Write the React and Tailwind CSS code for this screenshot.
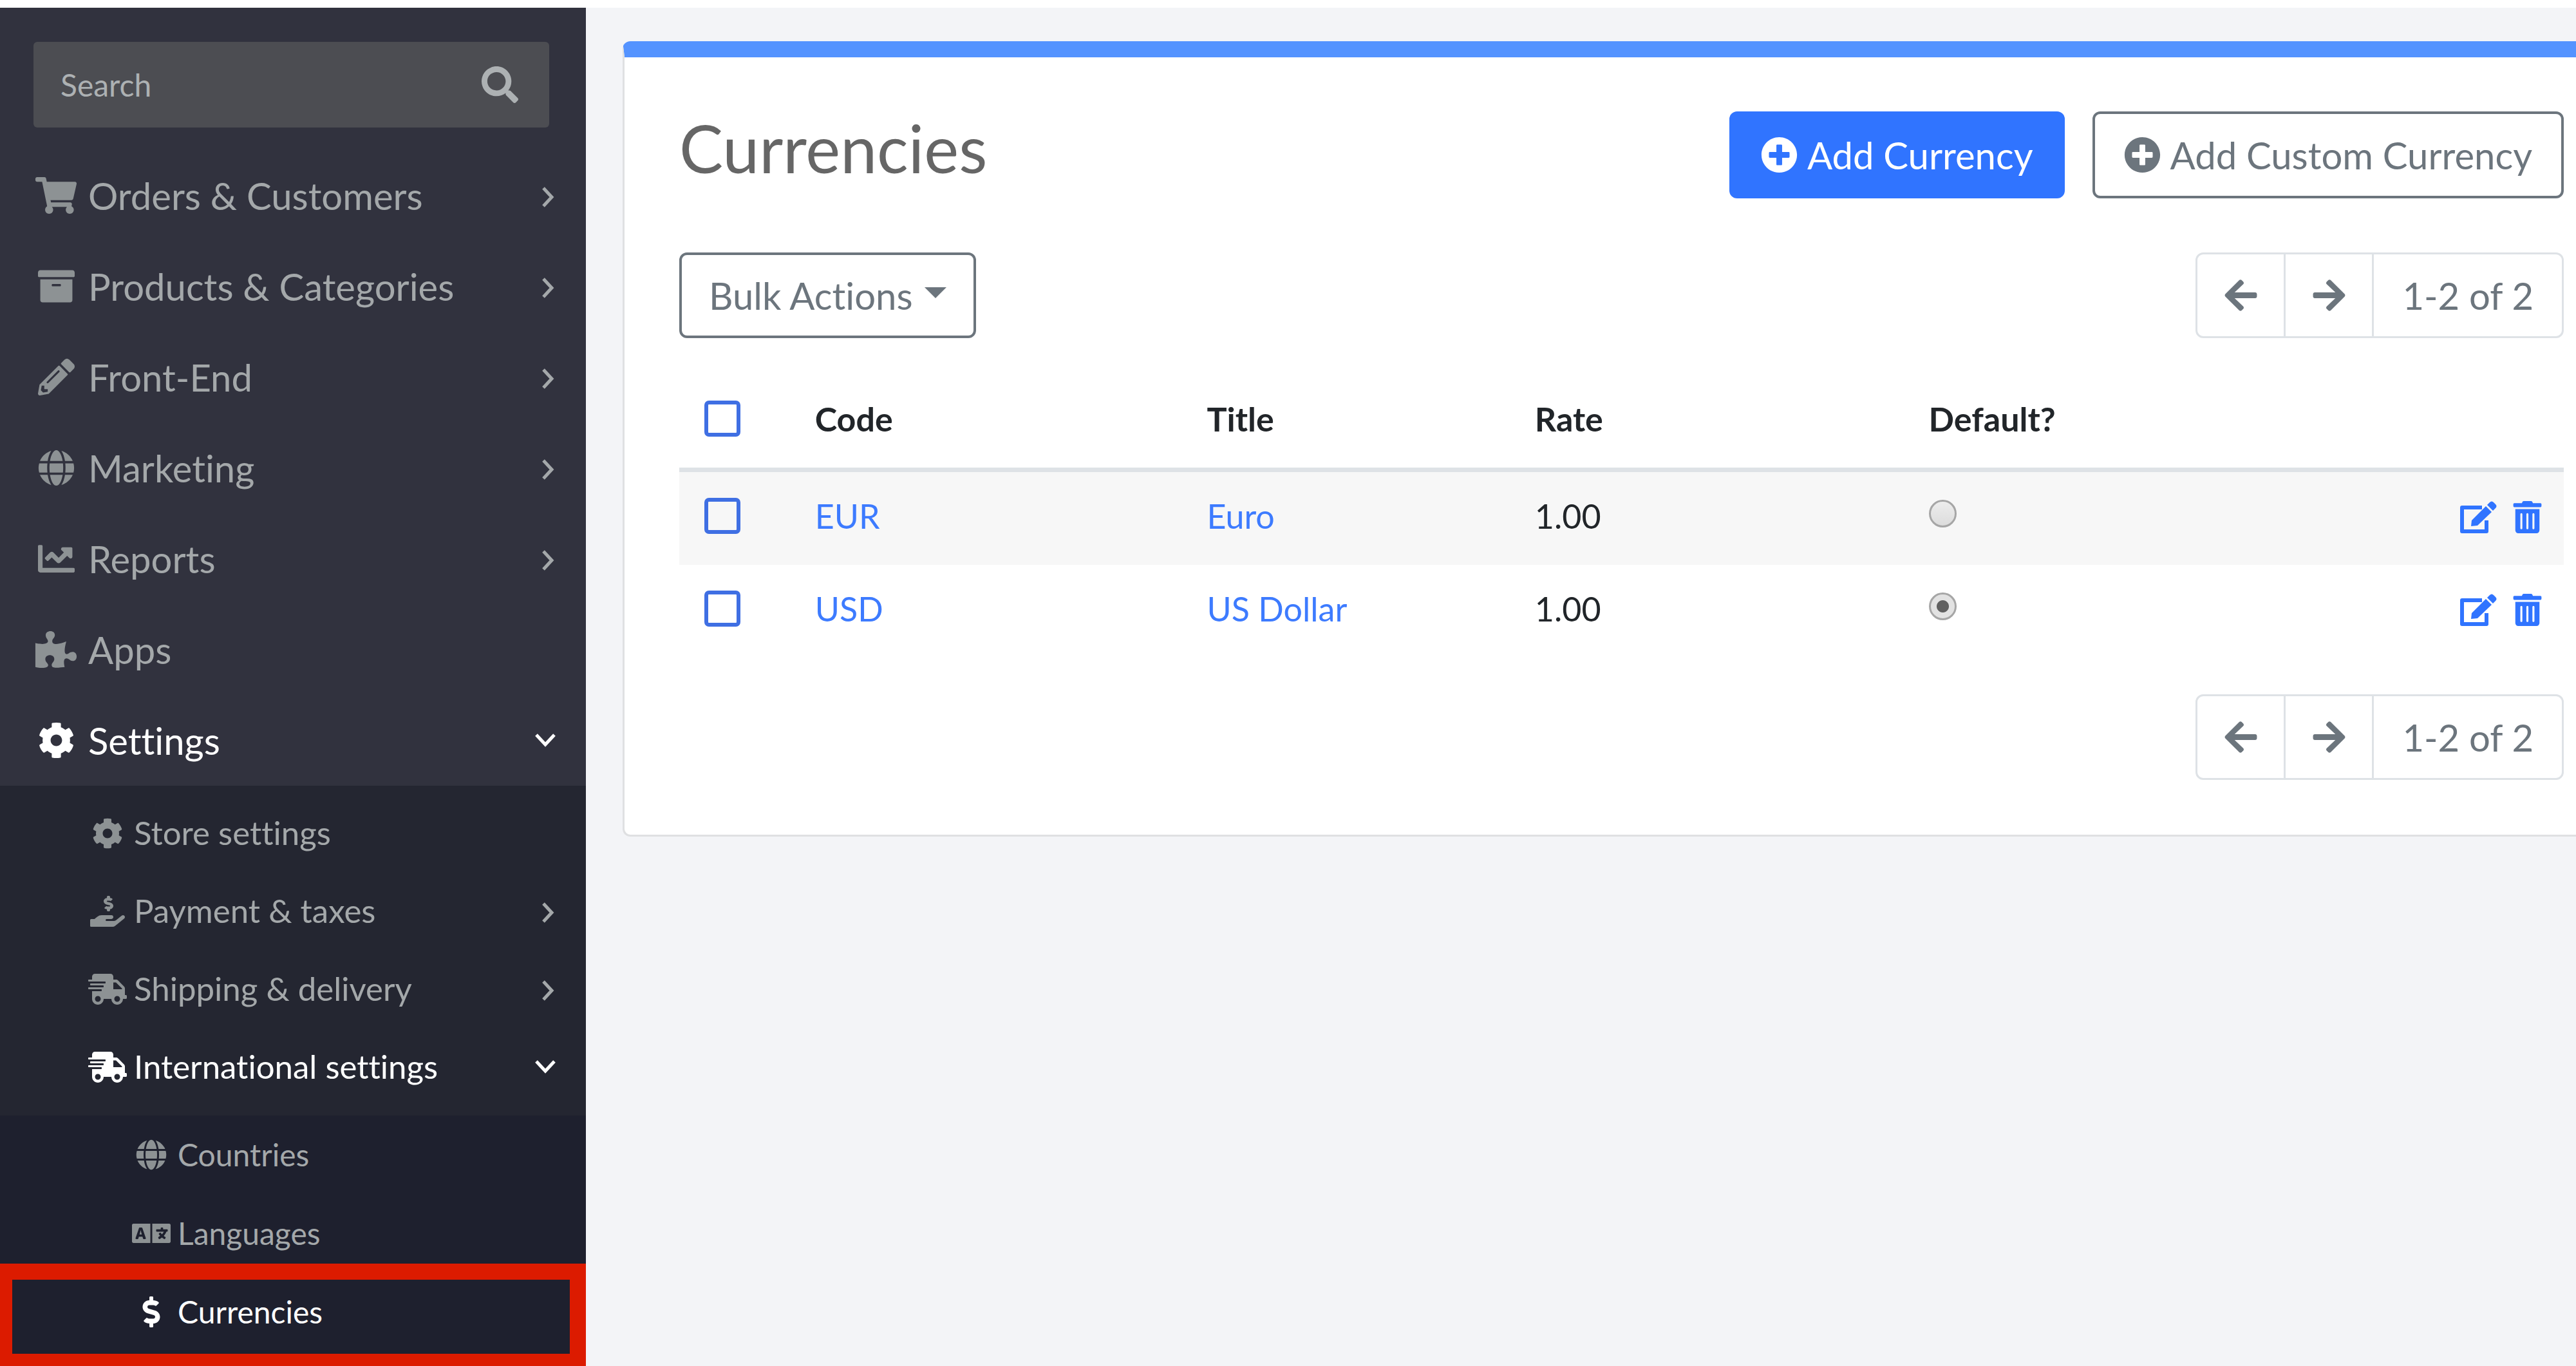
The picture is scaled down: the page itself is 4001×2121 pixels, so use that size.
import React, { useState } from "react";
import {
  FaArchive,
  FaArrowLeft,
  FaArrowRight,
  FaChartLine,
  FaCog,
  FaDollarSign,
  FaGlobe,
  FaHandHoldingUsd,
  FaLanguage,
  FaPencilAlt,
  FaPlusCircle,
  FaPuzzlePiece,
  FaSearch,
  FaShippingFast,
  FaShoppingCart,
  FaTrashAlt,
} from "react-icons/fa";

const mainMenu = [
  { label: "Orders & Customers", icon: FaShoppingCart, arrow: "right" },
  { label: "Products & Categories", icon: FaArchive, arrow: "right" },
  { label: "Front-End", icon: FaPencilAlt, arrow: "right" },
  { label: "Marketing", icon: FaGlobe, arrow: "right" },
  { label: "Reports", icon: FaChartLine, arrow: "right" },
  { label: "Apps", icon: FaPuzzlePiece },
  { label: "Settings", icon: FaCog, arrow: "down", active: true },
];

const settingsMenu = [
  { label: "Store settings", icon: FaCog },
  { label: "Payment & taxes", icon: FaHandHoldingUsd, arrow: "right" },
  { label: "Shipping & delivery", icon: FaShippingFast, arrow: "right" },
  { label: "International settings", icon: FaShippingFast, arrow: "down", active: true },
];

const internationalMenu = [
  { label: "Countries", icon: FaGlobe },
  { label: "Languages", icon: FaLanguage },
  { label: "Currencies", icon: FaDollarSign, active: true, highlight: true },
];

const currencies = [
  { code: "EUR", title: "Euro", rate: "1.00" },
  { code: "USD", title: "US Dollar", rate: "1.00" },
];

const levels = {
  1: { row: "h-[141px] pl-[52px] gap-[15px] text-[58px]", icon: "w-[70px]", svg: "size-[57px]" },
  2: { row: "h-[121px] pl-[136px] gap-[10px] text-[51px]", icon: "w-[62px]", svg: "size-[48px]" },
  3: { row: "h-[122px] pl-[204px] gap-[10px] text-[48px]", icon: "w-[62px]", svg: "size-[48px]" },
};

// icons wider than their em box keep the em height
const wideIcons = [FaShoppingCart, FaPuzzlePiece, FaHandHoldingUsd, FaShippingFast, FaLanguage];

const Chevron = ({ direction }) => (
  <svg
    viewBox="0 0 36 36"
    fill="none"
    stroke="currentColor"
    strokeWidth="5"
    className="size-[36px] shrink-0"
    aria-hidden="true"
  >
    <path d={direction === "down" ? "M4 9 L18 24 L32 9" : "M15 6 L28 20 L15 34"} />
  </svg>
);

const EditIcon = () => (
  <svg viewBox="0 0 57 50" fill="currentColor" className="h-[50px] w-[57px]" aria-hidden="true">
    <path d="M34 10H3V47H41V30" fill="none" stroke="currentColor" strokeWidth="6" strokeLinejoin="round" />
    <path d="M40 8L49 17L27 38L17 39L18 30Z" />
    <path d="M42 6L46 2Q49 -1 52 2L55 5Q58 8 55 11L51 15Z" />
  </svg>
);

const MenuItem = ({ item, level }) => {
  const Icon = item.icon;
  const styles = levels[level];
  const wide = wideIcons.includes(Icon);

  return (
    <li className="relative">
      <a
        href="#"
        className={`flex items-center pr-[45px] whitespace-nowrap ${styles.row} ${
          item.active ? "text-white" : "text-[#a4a8aa]"
        }`}
      >
        <span
          className={`flex shrink-0 justify-center ${styles.icon} ${
            item.active ? "text-white" : "text-[#8d9294]"
          }`}
        >
          <Icon className={wide ? `${styles.svg} w-full` : styles.svg} />
        </span>
        <span className="grow">{item.label}</span>
        {item.arrow && <Chevron direction={item.arrow} />}
      </a>
      {item.highlight && (
        <span className="pointer-events-none absolute inset-x-0 -top-[14px] -bottom-[23px] border-t-[25px] border-r-[25px] border-b-[19px] border-l-[19px] border-[#dc1b00]" />
      )}
    </li>
  );
};

const Sidebar = () => (
  <aside className="w-[910px] shrink-0 bg-[#31323e] pt-[53px]">
    <form className="mr-[57px] mb-[35px] ml-[52px] flex h-[133px] items-center rounded-[6px] bg-[#4c4d52] pr-[48px] pl-[42px]">
      <input
        type="text"
        aria-label="Search"
        placeholder="Search"
        className="min-w-0 grow bg-transparent text-[48px] text-white outline-none placeholder:text-[#adb1b3]"
      />
      <button type="button" aria-label="Search" className="text-[#adb1b3]">
        <FaSearch className="size-[57px]" />
      </button>
    </form>
    <nav>
      <ul>
        {mainMenu.map((item) => (
          <MenuItem key={item.label} item={item} level={1} />
        ))}
      </ul>
      <ul className="bg-[#242631] pt-[13px] pb-[15px]">
        {settingsMenu.map((item) => (
          <MenuItem key={item.label} item={item} level={2} />
        ))}
      </ul>
      <ul className="bg-[#1e202e] pb-[23px]">
        {internationalMenu.map((item) => (
          <MenuItem key={item.label} item={item} level={3} />
        ))}
      </ul>
    </nav>
  </aside>
);

const Pager = () => (
  <div className="flex h-[133px] divide-x-3 divide-[#dee2e6] rounded-[12px] border-3 border-[#dee2e6] text-[58px] text-[#6c757d]">
    <button type="button" aria-label="Previous page" className="flex w-[137px] items-center justify-center">
      <FaArrowLeft className="size-[57px]" />
    </button>
    <button type="button" aria-label="Next page" className="flex w-[137px] items-center justify-center">
      <FaArrowRight className="size-[57px]" />
    </button>
    <span className="flex items-center px-[44px]">1-2 of 2</span>
  </div>
);

const Checkbox = ({ label }) => (
  <input
    type="checkbox"
    aria-label={label}
    className="block size-[56px] appearance-none rounded-[7px] border-6 border-[#3f6fe3] bg-transparent checked:bg-[#3f6fe3]"
  />
);

const CurrencyTable = () => {
  const [defaultCode, setDefaultCode] = useState("USD");

  return (
    <table className="mt-[57px] w-full table-fixed border-separate border-spacing-0 text-left text-[52px] text-[#212529]">
      <thead>
        <tr>
          <th className="h-[151px] w-[7.2%] border-b-7 border-[#dee2e6] pb-2 pl-[39px]">
            <Checkbox label="Select all" />
          </th>
          <th className="w-[20.8%] border-b-7 border-[#dee2e6] pb-2 font-bold">Code</th>
          <th className="w-[17.4%] border-b-7 border-[#dee2e6] pb-2 font-bold">Title</th>
          <th className="w-[20.9%] border-b-7 border-[#dee2e6] pb-2 font-bold">Rate</th>
          <th className="border-b-7 border-[#dee2e6] pb-2 font-bold">Default?</th>
          <th className="w-[12%] border-b-7 border-[#dee2e6] pb-2" />
        </tr>
      </thead>
      <tbody>
        {currencies.map((currency) => (
          <tr key={currency.code} className="odd:bg-[#f7f7f7]">
            <td className="h-[144px] pb-2 pl-[39px]">
              <Checkbox label={`Select ${currency.code}`} />
            </td>
            <td className="pb-2">
              <a href="#" className="text-[#3d7bff]">{currency.code}</a>
            </td>
            <td className="pb-2">
              <a href="#" className="text-[#3d7bff]">{currency.title}</a>
            </td>
            <td className="pb-2">{currency.rate}</td>
            <td className="pb-4">
              <input
                type="radio"
                name="default"
                aria-label={`${currency.code} is default`}
                checked={defaultCode === currency.code}
                onChange={() => setDefaultCode(currency.code)}
                className="block size-[43px] appearance-none rounded-full border-3 border-[#a6a6a6] bg-linear-to-b from-[#ededed] to-[#dcdcdc] checked:bg-[radial-gradient(circle,#606060_9px,#e2e2e2_10px)]"
              />
            </td>
            <td className="pr-[34px] pb-1">
              <div className="flex items-center justify-end gap-[25px] text-[#3074ff]">
                <button type="button" aria-label={`Edit ${currency.code}`}>
                  <EditIcon />
                </button>
                <button type="button" aria-label={`Delete ${currency.code}`}>
                  <FaTrashAlt className="h-[50px] w-[45px]" />
                </button>
              </div>
            </td>
          </tr>
        ))}
      </tbody>
    </table>
  );
};

export default function App() {
  return (
    <div className="min-h-screen bg-white pt-3 font-['Lato',sans-serif] [font-variant-ligatures:none]">
      <div className="flex min-h-[calc(100vh-12px)] bg-[#f3f4f7]">
        <Sidebar />
        <main className="min-w-0 grow pt-[52px] pl-[57px]">
          <section className="rounded-l-[12px] border-b-3 border-l-3 border-t-25 border-b-[#dfe0e2] border-l-[#dfe0e2] border-t-[#5493ff] bg-white pt-[84px] pr-[19px] pb-[85px] pl-[85px]">
            <div className="flex items-start justify-between">
              <h1 className="text-[102px] leading-[114px] text-[#666666]">Currencies</h1>
              <div className="flex gap-[43px] text-[58px] whitespace-nowrap">
                <button
                  type="button"
                  className="flex h-[135px] items-center gap-[15px] rounded-[12px] bg-[#3074ff] px-[49px] text-white"
                >
                  <FaPlusCircle className="size-[57px]" />
                  Add Currency
                </button>
                <button
                  type="button"
                  className="flex h-[135px] items-center gap-[15px] rounded-[12px] border-4 border-[#6c757d] px-[45px] text-[#6c757d]"
                >
                  <FaPlusCircle className="size-[57px]" />
                  Add Custom Currency
                </button>
              </div>
            </div>

            <div className="mt-[84px] flex justify-between">
              <button
                type="button"
                className="flex h-[133px] items-center gap-[18px] rounded-[12px] border-4 border-[#6c757d] px-[42px] text-[58px] text-[#6c757d]"
              >
                Bulk Actions
                <svg viewBox="0 0 34 17" fill="currentColor" className="mb-2 h-[17px] w-[34px]" aria-hidden="true">
                  <path d="M0 0H34L17 17Z" />
                </svg>
              </button>
              <Pager />
            </div>

            <CurrencyTable />

            <div className="mt-[57px] flex justify-end">
              <Pager />
            </div>
          </section>
        </main>
      </div>
    </div>
  );
}
